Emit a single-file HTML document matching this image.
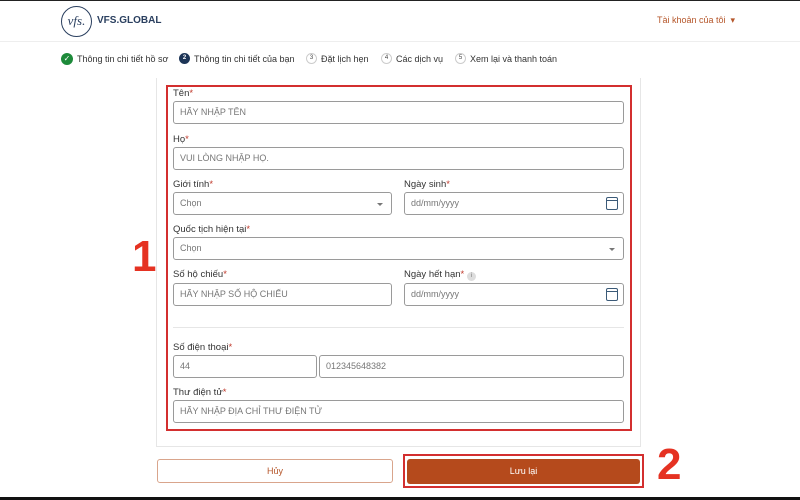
<!DOCTYPE html>
<html><head><meta charset="utf-8"><style>
*{box-sizing:border-box;margin:0;padding:0}
body{width:800px;height:500px;overflow:hidden;background:#fff;font-family:"Liberation Sans",Arial,sans-serif;position:relative;color:#333}
.a{position:absolute}
.lbl{position:absolute;font-size:9.5px;color:#333}
.lbl b{color:#c0392b;font-weight:normal}
.in{position:absolute;height:23px;border:1px solid #9a9a9a;border-radius:3px;font-size:9px;color:#777;padding-left:6px;line-height:21px;background:#fff}
.step{position:absolute;top:53px;font-size:9px;color:#333;display:flex;align-items:center;gap:4px;white-space:nowrap}
.num{width:11px;height:11px;border-radius:50%;border:1px solid #ccc;font-size:6px;text-align:center;line-height:9px;color:#444}
.cal{position:absolute;right:5px;top:4px;width:12px;height:13px;border:1.5px solid #3b5a78;border-radius:2px}
.cal:before{content:"";position:absolute;left:0;right:0;top:2px;border-top:1.5px solid #3b5a78}
.arr{position:absolute;right:8px;top:10px;border-left:3px solid transparent;border-right:3px solid transparent;border-top:3px solid #777}
</style></head><body>
<div class="a" style="left:0;top:0;width:800px;height:1px;background:#222"></div>
<div class="a" style="left:61px;top:6px;width:31px;height:31px;border:1.5px solid #2a3f5f;border-radius:50%;font-family:'Liberation Serif',serif;font-style:italic;font-size:13px;color:#2a3f5f;text-align:center;line-height:28px">vfs.</div>
<div class="a" style="left:97px;top:15px;font-size:10px;font-weight:bold;color:#2a3f5f">VFS.GLOBAL</div>
<div class="a" style="left:657px;top:15px;font-size:9px;color:#b5562a">Tài khoản của tôi &nbsp;▾</div>
<div class="a" style="left:0;top:41px;width:800px;height:1px;background:#eee"></div>
<div class="step" style="left:61px"><span style="width:12px;height:12px;border-radius:50%;background:#1d8a3a;color:#fff;font-size:8px;text-align:center;line-height:12px">✓</span>Thông tin chi tiết hồ sơ</div>
<div class="step" style="left:179px"><span class="num" style="background:#1d3557;border-color:#1d3557;color:#fff;font-weight:bold">2</span>Thông tin chi tiết của bạn</div>
<div class="step" style="left:306px"><span class="num">3</span>Đặt lịch hẹn</div>
<div class="step" style="left:381px"><span class="num">4</span>Các dịch vụ</div>
<div class="step" style="left:455px"><span class="num">5</span>Xem lại và thanh toán</div>
<div class="a" style="left:156px;top:78px;width:485px;height:369px;border:1px solid #e6e6e6;border-top:none"></div>
<div class="a" style="left:166px;top:85px;width:466px;height:346px;border:2px solid #d32f2f"></div>
<div class="lbl" style="left:173px;top:88px">Tên<b>*</b></div>
<div class="in" style="left:173px;top:101px;width:451px">HÃY NHẬP TÊN</div>
<div class="lbl" style="left:173px;top:134px">Họ<b>*</b></div>
<div class="in" style="left:173px;top:147px;width:451px">VUI LÒNG NHẬP HỌ.</div>
<div class="lbl" style="left:173px;top:179px">Giới tính<b>*</b></div>
<div class="in" style="left:173px;top:192px;width:219px">Chọn<span class="arr"></span></div>
<div class="lbl" style="left:404px;top:179px">Ngày sinh<b>*</b></div>
<div class="in" style="left:404px;top:192px;width:220px">dd/mm/yyyy<span class="cal"></span></div>
<div class="lbl" style="left:173px;top:224px">Quốc tịch hiện tại<b>*</b></div>
<div class="in" style="left:173px;top:237px;width:451px">Chọn<span class="arr"></span></div>
<div class="lbl" style="left:173px;top:269px">Số hộ chiếu<b>*</b></div>
<div class="in" style="left:173px;top:283px;width:219px">HÃY NHẬP SỐ HỘ CHIẾU</div>
<div class="lbl" style="left:404px;top:269px">Ngày hết hạn<b>*</b> <span style="display:inline-block;width:9px;height:9px;border-radius:50%;background:#ddd;color:#777;font-size:6px;text-align:center;line-height:9px">i</span></div>
<div class="in" style="left:404px;top:283px;width:220px">dd/mm/yyyy<span class="cal"></span></div>
<div class="a" style="left:173px;top:327px;width:451px;height:1px;background:#e6e6e6"></div>
<div class="lbl" style="left:173px;top:342px">Số điện thoại<b>*</b></div>
<div class="in" style="left:173px;top:355px;width:144px">44</div>
<div class="in" style="left:319px;top:355px;width:305px">012345648382</div>
<div class="lbl" style="left:173px;top:387px">Thư điện tử<b>*</b></div>
<div class="in" style="left:173px;top:400px;width:451px">HÃY NHẬP ĐỊA CHỈ THƯ ĐIỆN TỬ</div>
<div class="a" style="left:132px;top:232px;font-size:44px;font-weight:bold;color:#e53222">1</div>
<div class="a" style="left:157px;top:459px;width:236px;height:24px;border:1px solid #d9a58c;border-radius:3px;font-size:9px;color:#b5562a;text-align:center;line-height:22px">Hủy</div>
<div class="a" style="left:403px;top:454px;width:241px;height:34px;border:2px solid #d32f2f"></div>
<div class="a" style="left:407px;top:459px;width:233px;height:25px;background:#b54a1c;border-radius:3px;font-size:9px;color:#fff;text-align:center;line-height:25px">Lưu lại</div>
<div class="a" style="left:657px;top:440px;font-size:44px;font-weight:bold;color:#e53222">2</div>
<div class="a" style="left:0;top:497px;width:800px;height:3px;background:#111"></div>
</body></html>
